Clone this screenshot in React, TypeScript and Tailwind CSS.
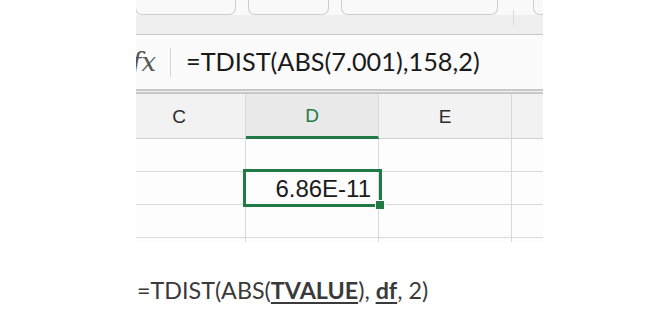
import React from "react";

const cols = ["C", "D", "E", ""];

function ToolbarButton({ w, ml }: { w: string; ml: string }) {
  return (
    <div
      className={`${w} ${ml} h-[15px] shrink-0 rounded-b-[7px] border-x border-b border-[#cdcdcd] bg-[#f9f9f9]`}
    />
  );
}

function HeaderRow() {
  return (
    <div className="flex h-[45px] shrink-0 -ml-[23px] bg-[#f2f2f2]">
      {cols.map((c, i) => {
        const active = c === "D";
        return (
          <div
            key={i}
            className={`relative flex w-[133px] shrink-0 items-center justify-center border-r border-[#d9d9d9] pt-[2px] font-['Liberation_Sans',Arial,sans-serif] text-[19px] ${
              active
                ? "bg-[#e9e9e9] text-[#1f7a45] border-b-[3px] border-b-[#1f7a45]"
                : "text-[#2b2b2b] border-b border-b-[#cfcfcf]"
            }`}
          >
            {c}
          </div>
        );
      })}
    </div>
  );
}

function GridRow({ selected }: { selected?: boolean }) {
  return (
    <div className="flex h-[33px] shrink-0 -ml-[23px]">
      {cols.map((c, i) => (
        <div
          key={i}
          className="relative w-[133px] shrink-0 border-r border-b border-[#d9d9d9] bg-[#fdfdfd]"
        >
          {selected && c === "D" && (
            <div className="absolute -left-[3px] -top-[3px] z-10 flex h-[38px] w-[139px] items-center justify-end border-[3px] border-[#1f7a45] pr-[8px] font-['Liberation_Sans',Arial,sans-serif] text-[24px] leading-none text-[#1b1b1b]">
              <span className="pt-[1px]">6.86E-11</span>
              <div className="absolute -bottom-[6px] -right-[6px] h-[10px] w-[10px] border border-white bg-[#1f7a45]" />
            </div>
          )}
        </div>
      ))}
    </div>
  );
}

export default function App() {
  return (
    <div className="flex h-[321px] w-[671px] flex-col overflow-hidden bg-white">
      <div className="ml-[136px] flex h-[242px] w-[407px] shrink-0 flex-col overflow-hidden bg-[#fafafa]">
        {/* toolbar */}
        <div className="relative h-[35px] shrink-0 border-b border-[#c8c8c8] bg-[#efefef]">
          <div className="flex h-[15px] bg-[#f9f9f9]">
            <ToolbarButton w="w-[101px]" ml="-ml-[1px]" />
            <ToolbarButton w="w-[81px]" ml="ml-[12px]" />
            <ToolbarButton w="w-[157px]" ml="ml-[12px]" />
            <div className="ml-[15px] mt-[10px] h-[15px] w-px shrink-0 bg-[#dadada]" />
            <ToolbarButton w="w-[40px]" ml="ml-[19px]" />
          </div>
        </div>

        {/* formula bar */}
        <div className="flex h-[54px] shrink-0 items-center bg-[#fbfbfb]">
          <span className="-ml-[4px] w-[38px] font-['DejaVu_Serif',serif] text-[26px] italic leading-none text-[#555]">
            fx
          </span>
          <div className="h-[29px] w-px bg-[#d4d4d4]" />
          <span className="ml-[15px] font-['Lato',sans-serif] text-[25.3px] leading-none text-[#1a1a1a]">
            =TDIST(ABS(7.001),158,2)
          </span>
        </div>
        <div className="h-[5px] shrink-0 border-y-2 border-[#c7c7c7] bg-[#f4f4f4]" />

        <HeaderRow />
        <GridRow />
        <GridRow selected />
        <GridRow />
        <GridRow />
      </div>

      <div className="ml-[137px] mt-[37px] font-['Lato',sans-serif] text-[23.3px] leading-none text-[#3a3a3a]">
        =TDIST(ABS(
        <span className="font-bold underline decoration-2 underline-offset-[3px]">TVALUE</span>
        ), <span className="font-bold underline decoration-2 underline-offset-[3px]">df</span>, 2)
      </div>
    </div>
  );
}
